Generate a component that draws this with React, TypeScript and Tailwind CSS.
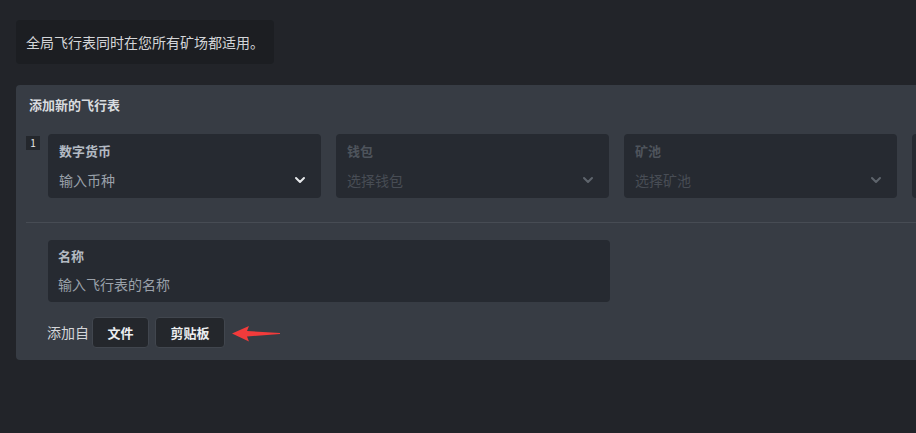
import * as React from "react";

const font = { fontFamily: '"Noto Sans CJK SC", "Noto Sans", sans-serif' };

const Chevron: React.FC<{ className?: string }> = ({ className }) => (
  <svg viewBox="0 0 24 24" className={className} fill="none" stroke="currentColor" strokeWidth={3} strokeLinecap="round" strokeLinejoin="round">
    <path d="M6 9l6 6 6-6" />
  </svg>
);

interface ISelectProps {
  label: string;
  placeholder: string;
  disabled?: boolean;
}

const SelectBox: React.FC<ISelectProps> = ({ label, placeholder, disabled }) => (
  <div className="w-[273px] h-[64px] shrink-0 rounded-sm bg-[#262a31] px-[11px] pt-[8px]">
    <div className={`text-[13px] leading-[18px] font-bold ${disabled ? "text-[#4e545c]" : "text-[#b3bac3]"}`}>{label}</div>
    <div className="mt-[10px] flex items-center justify-between">
      <span className={`text-[14px] leading-[20px] ${disabled ? "text-[#484d55]" : "text-[#9aa1aa]"}`}>{placeholder}</span>
      <Chevron className={`w-[16px] h-[16px] mr-[2px] ${disabled ? "text-[#5e646c]" : "text-[#e6e8eb]"}`} />
    </div>
  </div>
);

export default function App() {
  return (
    <div className="min-h-screen overflow-hidden bg-[#222429] pt-5 pl-4" style={font}>
      {/* info */}
      <div className="inline-flex h-[44px] items-center rounded-sm bg-[#1c1e22] px-[10px] text-[14px] text-[#d4d6d9]">
        全局飞行表同时在您所有矿场都适用。
      </div>

      {/* panel */}
      <div className="mt-[21px] rounded-l-sm bg-[#373c44] pt-[11px] pb-[12px]">
        <div className="px-[13px] text-[13px] leading-[17px] font-bold text-[#d8dbdf]">添加新的飞行表</div>

        <div className="mt-[21px] flex pl-[10px]">
          <div className="mt-[2px] flex h-[14px] w-[14px] shrink-0 items-center justify-center bg-[#24272c] text-[10px] leading-none text-[#e8e8e8]">1</div>
          <div className="ml-[8px] flex gap-[15px]">
            <SelectBox label="数字货币" placeholder="输入币种" />
            <SelectBox label="钱包" placeholder="选择钱包" disabled />
            <SelectBox label="矿池" placeholder="选择矿池" disabled />
            <SelectBox label="" placeholder="" disabled />
          </div>
        </div>

        <div className="ml-[10px] mt-[24px] h-px bg-[#474c54]" />

        <div className="ml-[32px] mt-[17px] h-[62px] w-[562px] rounded-sm bg-[#262a31] px-[10px] pt-[7px]">
          <div className="text-[13px] leading-[18px] font-bold text-[#b3bac3]">名称</div>
          <div className="mt-[9px] text-[14px] leading-[20px] text-[#9aa1aa]">输入飞行表的名称</div>
        </div>

        <div className="ml-[31px] mt-[15px] flex items-center">
          <span className="text-[14px] text-[#d4d6d9]">添加自</span>
          <button className="ml-[3px] h-[31px] w-[57px] rounded-sm border border-[#41464e] bg-[#24272c] text-[13px] font-bold text-[#eceef0]">文件</button>
          <button className="ml-[6px] h-[31px] w-[70px] rounded-sm border border-[#41464e] bg-[#24272c] text-[13px] font-bold text-[#eceef0]">剪贴板</button>
          <svg viewBox="0 0 48 16" className="ml-[7px] mt-[2px] h-[16px] w-[48px]">
            <path d="M0 7.5 L17 0 L15 5 L48 7 L48 8 L15 10.5 L17 15.5 Z" fill="#f23b3b" />
          </svg>
        </div>
      </div>
    </div>
  );
}
